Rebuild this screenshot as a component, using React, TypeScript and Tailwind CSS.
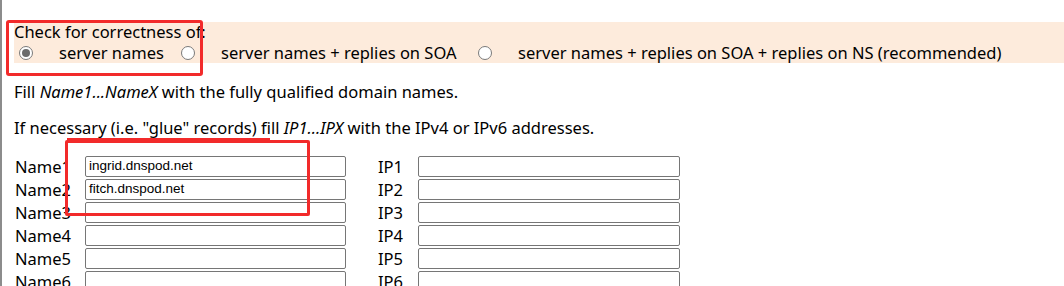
import React from "react";

type RadioProps = { checked?: boolean };

function Radio({ checked }: RadioProps) {
  return (
    <span className="flex h-[14px] w-[14px] shrink-0 items-center justify-center rounded-full border border-[#7a7a7a] bg-white">
      {checked ? <span className="h-[8px] w-[8px] rounded-full bg-[#6b6b6b]" /> : null}
    </span>
  );
}

const rows = [1, 2, 3, 4, 5, 6];
const names: Record<number, string> = { 1: "ingrid.dnspod.net", 2: "fitch.dnspod.net" };

export default function App() {
  return (
    <div
      className="relative h-[286px] w-[1064px] overflow-hidden border-l-2 border-[#8c8c8c] bg-white pl-[12px] text-[16.5px] text-black"
      style={{ fontFamily: '"Noto Sans", "Noto Sans CJK SC", sans-serif' }}
    >
      {/* correctness options */}
      <div className="mt-[22px] bg-[#fdebdc] whitespace-nowrap">
        <div className="h-[20px] leading-[20px]">Check for correctness of:</div>
        <div className="flex h-[21px] items-center leading-[21px]">
          <span className="ml-[5px]"><Radio checked /></span>
          <span className="ml-[26px] w-[101px]">server names</span>
          <span className="ml-[21px]"><Radio /></span>
          <span className="ml-[26px] w-[235px]">server names + replies on SOA</span>
          <span className="ml-[22px]"><Radio /></span>
          <span className="ml-[26px]">server names + replies on SOA + replies on NS (recommended)</span>
        </div>
      </div>

      <p className="mt-[19px] leading-[20px] whitespace-nowrap">
        Fill <i>Name1...NameX</i> with the fully qualified domain names.
      </p>
      <p className="mt-[16px] leading-[20px] whitespace-nowrap">
        If necessary (i.e. "glue" records) fill <i>IP1...IPX</i> with the IPv4 or IPv6 addresses.
      </p>

      {/* name / ip table */}
      <div className="mt-[18px] flex flex-col gap-[2px]">
        {rows.map((n) => (
          <div key={n} className="flex h-[21px] items-center">
            <span className="w-[71px] pl-[1px] leading-[21px]">Name{n}</span>
            <div
              className="flex h-[21px] w-[261px] items-center rounded-[2px] border border-[#767676] bg-white px-[3px] text-[13.5px]"
              style={{ fontFamily: '"Liberation Sans", Arial, sans-serif' }}
            >
              {names[n] ?? ""}
            </div>
            <span className="ml-[32px] w-[40px] leading-[21px]">IP{n}</span>
            <div className="h-[21px] w-[262px] rounded-[2px] border border-[#767676] bg-white" />
          </div>
        ))}
      </div>

      {/* red annotations */}
      <div className="absolute left-[4px] top-[20px] h-[56px] w-[197px] rounded-[3px] border-[3px] border-[#f22a2a]" />
      <div className="absolute left-[63px] top-[140px] h-[76px] w-[245px] rounded-[2px] border-[3px] border-[#f22a2a]" />
      <div className="absolute left-[65px] top-[138px] h-[2px] w-[203px] bg-[#f22a2a]" />
    </div>
  );
}
